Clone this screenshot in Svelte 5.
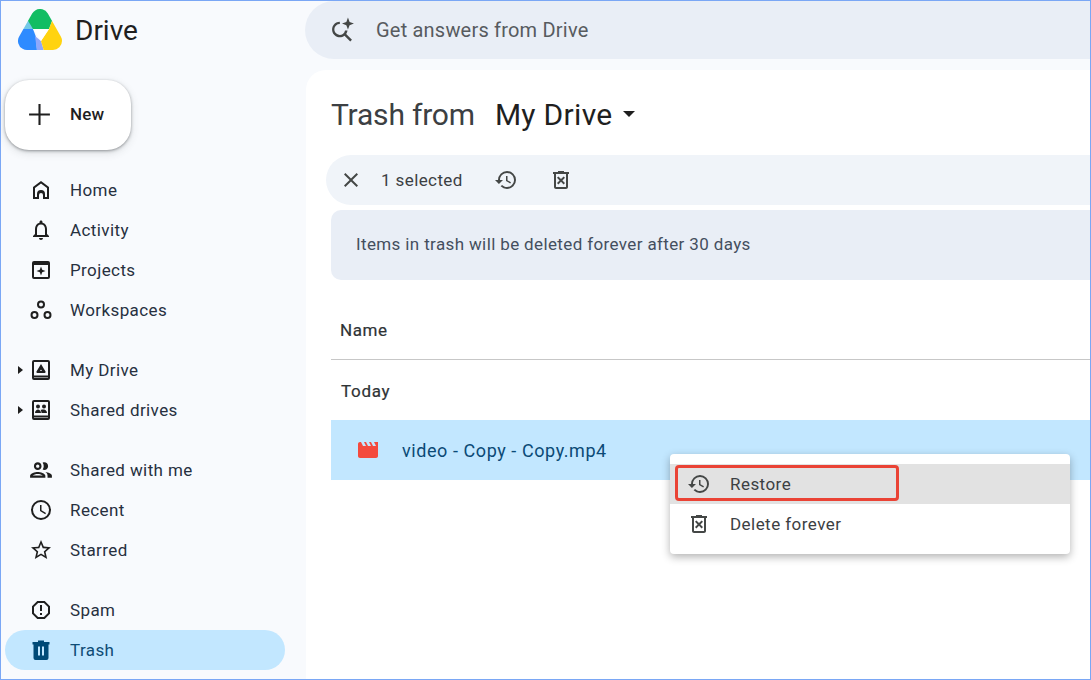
<script lang="ts">
  const paths: Record<string, string> = {
    bell: 'M12 22c1.1 0 2-.9 2-2h-4c0 1.1.9 2 2 2zm6-6v-5c0-3.07-1.63-5.64-4.5-6.32V4c0-.83-.67-1.5-1.5-1.5s-1.5.67-1.5 1.5v.68C7.64 5.36 6 7.92 6 11v5l-2 2v1h16v-1l-2-2zm-2 1H8v-6c0-2.48 1.51-4.5 4-4.5s4 2.02 4 4.5v6z',
    people: 'M9 13.75c-2.34 0-7 1.17-7 3.5V19h14v-1.75c0-2.33-4.66-3.5-7-3.5zM4.34 17c.84-.58 2.87-1.25 4.66-1.25s3.82.67 4.66 1.25H4.34zM9 12c1.93 0 3.5-1.57 3.5-3.5S10.93 5 9 5 5.5 6.57 5.5 8.5 7.07 12 9 12zm0-5c.83 0 1.5.67 1.5 1.5S9.83 10 9 10s-1.5-.67-1.5-1.5S8.17 7 9 7zm7.04 6.81c1.16.84 1.96 1.96 1.96 3.44V19h4v-1.75c0-2.02-3.5-3.17-5.96-3.44zM15 12c1.93 0 3.5-1.57 3.5-3.5S16.93 5 15 5c-.54 0-1.04.13-1.5.35.63.89 1 1.98 1 3.15s-.37 2.26-1 3.15c.46.22.96.35 1.5.35z',
    clock: 'M12 2a10 10 0 1 0 0 20 10 10 0 0 0 0-20zm0 18a8 8 0 1 1 0-16 8 8 0 0 1 0 16zM12.5 7H11v6l5.25 3.15.75-1.23-4.5-2.67z',
    star: 'M22 9.24l-7.19-.62L12 2 9.19 8.63 2 9.24l5.46 4.73L5.82 21 12 17.27 18.18 21l-1.63-7.03L22 9.24zM12 15.4l-3.76 2.27 1-4.28-3.32-2.88 4.38-.38L12 6.1l1.71 4.04 4.38.38-3.32 2.88 1 4.28L12 15.4z',
    spam: 'M15.73 3H8.27L3 8.27v7.46L8.27 21h7.46L21 15.73V8.27L15.73 3zM19 14.9L14.9 19H9.1L5 14.9V9.1L9.1 5h5.8L19 9.1v5.8zM11 7h2v6h-2zM11 15h2v2h-2z',
    trash: 'M9 2.500h6V4h5.500v2.500h-1V20a2 2 0 0 1-2 2h-11a2 2 0 0 1-2-2V6.500h-1V4H9zM9 8.500h2v9H9zM13 8.500h2v9h-2z',
    history: 'M13 3a9 9 0 0 0-9 9H1l3.89 3.89.07.14L9 12H6c0-3.87 3.13-7 7-7s7 3.13 7 7-3.13 7-7 7c-1.93 0-3.68-.79-4.94-2.06l-1.42 1.42A8.954 8.954 0 0 0 13 21a9 9 0 0 0 0-18zm-1 5v5l4.28 2.54.72-1.21-3.5-2.08V8H12z',
    deleteX: 'M15 4V3H9v1H4v2h1v13c0 1.1.9 2 2 2h10c1.1 0 2-.9 2-2V6h1V4h-5zm2 15H7V6h10v13zM9.4 16.4l2.6-2.6 2.6 2.6 1.4-1.4-2.6-2.6 2.6-2.6L14.600 8.400l-2.600 2.600-2.600-2.600L8 9.800l2.600 2.600L8 15z',
    home: 'M4 21V9l8-6 8 6v12zM6 19h2v-3a4 4 0 0 1 8 0v3h2v-9l-6-4.500L6 10zM10 21v-4a2 2 0 0 1 4 0v4z',
    projects: 'M5 3h14a2 2 0 0 1 2 2v14a2 2 0 0 1-2 2H5a2 2 0 0 1-2-2V5a2 2 0 0 1 2-2zm0 4v12h14V7zM12 8.500l1.200 3.300 3.300 1.200-3.300 1.200-1.200 3.300-1.200-3.300L7.500 13l3.300-1.200z',
    myDrive: 'M5 2h14a2 2 0 0 1 2 2v16a2 2 0 0 1-2 2H5a2 2 0 0 1-2-2V4a2 2 0 0 1 2-2zm0 2v13.500h14V4zm0 15.500V20h14v-.500zM12 6l4.500 7.500a1 1 0 0 1-.9 1.500H8.400a1 1 0 0 1-.9-1.500zm0 5.500-1 1.500h2z',
    sharedDrives: 'M5 2h14a2 2 0 0 1 2 2v16a2 2 0 0 1-2 2H5a2 2 0 0 1-2-2V4a2 2 0 0 1 2-2zm0 2v13.500h14V4zm0 15.500V20h14v-.500zM9 6.500a2 2 0 1 1 0 4 2 2 0 0 1 0-4zm6 0a2 2 0 1 1 0 4 2 2 0 0 1 0-4zM6 15c0-2 1.800-3.500 3-3.500s3 1.500 3 3.500zm6.500 0c0-1.500-.500-2.500-1-3 .900-.400 2.500-.500 3.500-.500 1.200 0 3 1.500 3 3.500z',
  };

  const primary = [
    { label: 'Home', icon: 'home' },
    { label: 'Activity', icon: 'bell' },
    { label: 'Projects', icon: 'projects' },
    { label: 'Workspaces', icon: 'workspaces' },
  ];
  const drives = [
    { label: 'My Drive', icon: 'myDrive', caret: true },
    { label: 'Shared drives', icon: 'sharedDrives', caret: true },
  ];
  const shared = [
    { label: 'Shared with me', icon: 'people' },
    { label: 'Recent', icon: 'clock' },
    { label: 'Starred', icon: 'star' },
  ];
  const bottom = [
    { label: 'Spam', icon: 'spam' },
    { label: 'Trash', icon: 'trash', active: true },
  ];
  const groups = [primary, drives, shared, bottom];
</script>

{#snippet icon(name: string, cls = 'ico')}
  <svg class={cls} viewBox={name === 'people' ? '1 1 22 22' : '0 0 24 24'} aria-hidden="true">
    {#if name === 'workspaces'}
      <g fill="none" stroke="currentColor" stroke-width="2"><circle cx="12" cy="6.500" r="3" /><circle cx="5.500" cy="17" r="3" /><circle cx="18.500" cy="17" r="3" /></g>
    {:else}
      <path fill="currentColor" fill-rule="evenodd" d={paths[name]} />
    {/if}
  </svg>
{/snippet}

<div class="page">
  <aside class="side">
    <div class="brand">
      <svg class="logo" viewBox="0 0 44 42" aria-hidden="true">
        <defs>
          <mask id="tri"><path d="M22 9 9 32h26z" fill="#fff" stroke="#fff" stroke-width="18" stroke-linejoin="round" /></mask>
        </defs>
        <g mask="url(#tri)">
          <path d="M0 0h44v12H34l-3 8H0z" fill="#12bd63" />
          <path d="M3 20 9 10l6 10z" fill="#74c9e6" />
          <path d="M0 20h15l3 8 1 14H0z" fill="#2e8bff" />
          <path d="M17 27l6 5 3 10h-7z" fill="#8fa8fb" />
          <path d="M34 12h10v30H26l-3-10 8-12z" fill="#ffd30f" />
          <path d="M15 20h16l-8 12z" fill="#fff" />
        </g>
      </svg>
      <span>Drive</span>
    </div>
    <button class="new">
      <svg viewBox="0 0 24 24" aria-hidden="true"><path fill="currentColor" d="M11 2h2v9h9v2h-9v9h-2v-9H2v-2h9z" /></svg>
      <span>New</span>
    </button>
    <nav>
      {#each groups as group}
        <ul>
          {#each group as item}
            <li class:active={item.active}>
              {#if item.caret}<i class="caret"></i>{/if}
              {@render icon(item.icon)}
              <span>{item.label}</span>
            </li>
          {/each}
        </ul>
      {/each}
    </nav>
  </aside>

  <div class="content">
    <div class="search">
      <svg class="ico spark" viewBox="0 0 24 24" aria-hidden="true">
        <path fill="currentColor" d="M10 4.300a7.200 7.200 0 1 0 4.300 13l5.300 5.300 1.600-1.600-5.300-5.300a7.200 7.200 0 0 0 1.200-3.200h-2.300a5 5 0 1 1-4.800-6z" />
        <path fill="currentColor" d="M17.500 .5l1.500 4 4 1.500-4 1.500-1.500 4-1.500-4-4-1.500 4-1.500z" />
      </svg>
      <span>Get answers from Drive</span>
    </div>
    <main>
      <h1><span class="from">Trash from</span><span class="drive">My Drive</span><i class="down"></i></h1>
      <div class="selbar">
        <svg class="ico close" viewBox="0 0 24 24" aria-hidden="true"><path fill="currentColor" d="M19 6.400 17.600 5 12 10.600 6.400 5 5 6.400 10.600 12 5 17.600 6.400 19 12 13.400 17.600 19 19 17.600 13.400 12z" /></svg>
        <span class="count">1 selected</span>
        {@render icon('history', 'ico restore')}
        {@render icon('deleteX', 'ico del')}
      </div>
      <div class="notice">Items in trash will be deleted forever after 30 days</div>
      <div class="head">Name</div>
      <div class="today">Today</div>
      <div class="row">
        <svg class="movie" viewBox="0 0 24 24" aria-hidden="true"><path fill="#f44a3e" d="M18 4l2 4h-3l-2-4h-2l2 4h-3l-2-4H8l2 4H7L5 4H4c-1.100 0-2 .9-2 2v12c0 1.100.9 2 2 2h16c1.100 0 2-.9 2-2V4z" /></svg>
        <span>video - Copy - Copy.mp4</span>
      </div>
    </main>
    <div class="menu">
      <div class="item hover">
        {@render icon('history')}
        <span>Restore</span>
        <b class="mark"></b>
      </div>
      <div class="item">
        {@render icon('deleteX')}
        <span>Delete forever</span>
      </div>
    </div>
  </div>
  <div class="frame"></div>
</div>

<style>
  :global(body){margin:0;background:#f8fafd}
  .page{position:relative;display:flex;width:1091px;height:680px;overflow:hidden;background:#f8fafd;font-family:Roboto,"Liberation Sans",sans-serif;color:#1f1f1f}
  .frame{position:absolute;inset:0;border:1px solid #7aa7f5;pointer-events:none}
  .side{flex:0 0 305px;padding-left:5px;box-sizing:border-box}
  .brand{display:flex;align-items:center;gap:13px;height:60px;padding-left:13px}
  .logo{width:44px;height:42px}
  .brand span{font-size:28px;color:#1f1f1f}
  .new{display:flex;align-items:center;gap:18px;width:126px;height:70px;margin-top:20px;padding:0 0 2px 22px;border:0;border-radius:24px;background:#fff;box-shadow:0 1px 3px rgba(60,64,67,.5),0 3px 8px rgba(60,64,67,.15);color:#1f1f1f;font:500 17px Roboto,sans-serif;letter-spacing:.2px}
  .new svg{width:25px;height:25px}
  nav{margin-top:20px}
  ul{list-style:none;margin:0 0 20px;padding:0}
  li{position:relative;display:flex;align-items:center;width:280px;height:40px;padding-left:24px;box-sizing:border-box;font-size:17px;letter-spacing:.4px;color:#1f1f1f}
  li svg{width:25px;height:25px;margin:0 -.5px}
  li span{margin-left:18px;color:#27303f}
  li.active{border-radius:20px;background:#c2e7ff;color:#004a77}
  li.active span{color:#0f4c75}
  .caret{position:absolute;left:13px;top:16px;border:4px solid transparent;border-left:5px solid #1f1f1f;border-right:0}
  .ico{flex:none;width:24px;height:24px}
  .content{position:relative;flex:1;min-width:0}
  .search{display:flex;align-items:center;height:58px;margin-top:1px;padding-left:24px;border-radius:29px 0 0 29px;background:#e9eef6;color:#444746;font-size:20px;letter-spacing:.2px}
  .search span{margin-left:21px;color:#575b5f}
  .search .spark{width:26px;height:26px}
  main{box-sizing:border-box;height:610px;margin:11px 0 0 1px;padding:0 0 0 25px;border-radius:20px 0 0 0;background:#fff}
  h1{display:flex;align-items:center;height:90px;margin:0;padding-bottom:2px;box-sizing:border-box;font-weight:400;font-size:30px}
  .from{color:#3c4043;letter-spacing:-.2px}
  .drive{margin-left:20px;color:#1f1f1f;letter-spacing:.3px}
  .down{margin-left:10px;border:6px solid transparent;border-top:6px solid #1f1f1f;border-bottom:0}
  .selbar{display:flex;align-items:center;height:50px;margin-left:-5px;margin-top:-5px;padding-left:13px;border-radius:25px 0 0 25px;background:#f0f4f9;font-size:17px;color:#444746}
  .close{width:24px;height:24px}
  .count{margin-left:18px;color:#3c4043;letter-spacing:.4px}
  .selbar .restore{margin-left:31px}
  .selbar .del{margin-left:31px}
  .notice{display:flex;align-items:center;height:70px;margin-top:5px;padding:0 0 2px 25px;box-sizing:border-box;border-radius:10px 0 0 10px;background:#e9eef6;font-size:17px;letter-spacing:.37px;color:#444f5e}
  .head{display:flex;align-items:center;height:80px;padding:20px 0 0 9px;box-sizing:border-box;border-bottom:1px solid #c7c7c7;font-size:17px;letter-spacing:.6px;color:#2f3336;-webkit-text-stroke:.2px #2f3336}
  .today{display:flex;align-items:center;height:60px;padding:2px 0 0 10px;box-sizing:border-box;font-size:17px;letter-spacing:.7px;color:#2f3336;-webkit-text-stroke:.2px #2f3336}
  .row{display:flex;align-items:center;height:60px;padding-left:25px;background:#c2e7ff;font-size:18px;letter-spacing:.57px;color:#0b4a76}
  .row span{margin-left:22px}
  .movie{width:24px;height:24px}
  .menu{position:absolute;left:365px;top:454px;width:400px;height:100px;padding-top:10px;box-sizing:border-box;border-radius:4px;background:#fff;box-shadow:0 3px 8px rgba(0,0,0,.3);font-size:17px;color:#3c4043}
  .item{position:relative;display:flex;align-items:center;height:40px;padding-left:17px;color:#444746;letter-spacing:.45px}
  .item span{margin-left:19px;color:#3c4043}
  .hover{background:#e2e2e2}
  .mark{position:absolute;left:5px;top:1px;width:218px;height:30px;border:3px solid #ea4335;border-radius:4px}
</style>
